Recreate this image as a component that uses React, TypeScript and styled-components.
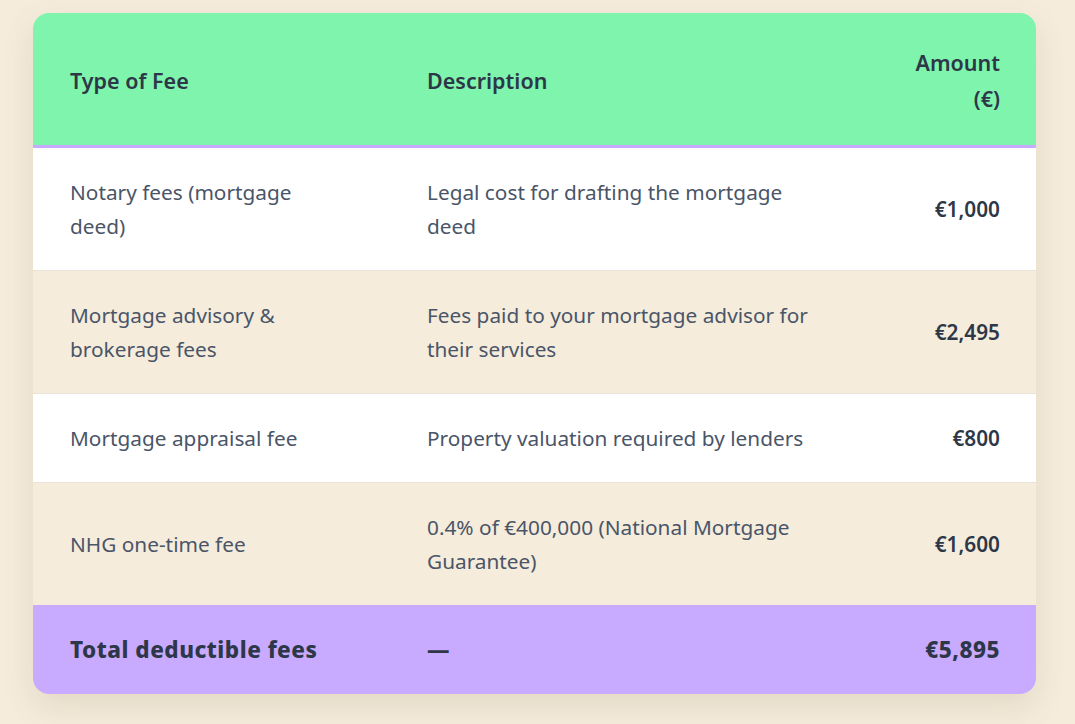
import styled, { createGlobalStyle } from 'styled-components';

const GlobalStyle = createGlobalStyle`
  html, body {
    margin: 0;
    padding: 0;
    background: #f5ecdc;
  }
  body {
    font-family: "Noto Sans", "Open Sans", sans-serif;
  }
`;

const Page = styled.div`
  padding: 13px 39px 30px 33px;
`;

const Card = styled.div`
  width: 1003px;
  border-radius: 16px;
  overflow: hidden;
  box-shadow: 0 12px 32px rgba(120, 100, 60, 0.14);
`;

const Table = styled.table`
  width: 100%;
  border-collapse: collapse;
  table-layout: fixed;
`;

const HeadRow = styled.tr`
  background: #7ef4ad;
  border-bottom: 3px solid #c8aaff;
`;

// padRight keeps the wrap points of each column
const Th = styled.th<{ align?: 'left' | 'right'; padRight?: number }>`
  padding: 32px ${({ padRight }) => padRight ?? 36}px 28px 37px;
  text-align: ${({ align }) => align || 'left'};
  font-size: 21.5px;
  font-weight: 600;
  line-height: 36px;
  color: #2d3748;
  vertical-align: middle;
`;

const Row = styled.tr<{ shade: boolean }>`
  background: ${({ shade }) => (shade ? '#f5ecdc' : '#ffffff')};
  border-bottom: 1px solid #e9e3d7;

  &:nth-last-child(2) {
    border-bottom: none;
  }
`;

const Td = styled.td<{ padRight?: number }>`
  padding: 27px ${({ padRight }) => padRight ?? 36}px 27px 37px;
  font-size: 20.8px;
  line-height: 34px;
  color: #4a5568;
  vertical-align: middle;
`;

const AmountTd = styled(Td)`
  text-align: right;
  font-weight: 600;
  color: #2d3748;
`;

const TotalRow = styled.tr`
  background: #c8aaff;
`;

const TotalTd = styled.td<{ align?: 'left' | 'right' }>`
  padding: 28px 36px 27px 37px;
  font-size: 22.5px;
  line-height: 34px;
  font-weight: 800;
  letter-spacing: 0.5px;
  color: #2d3748;
  text-align: ${({ align }) => align || 'left'};
`;

const fees = [
  { type: 'Notary fees (mortgage deed)', desc: 'Legal cost for drafting the mortgage deed', amount: '€1,000' },
  { type: 'Mortgage advisory & brokerage fees', desc: 'Fees paid to your mortgage advisor for their services', amount: '€2,495' },
  { type: 'Mortgage appraisal fee', desc: 'Property valuation required by lenders', amount: '€800' },
  { type: 'NHG one-time fee', desc: '0.4% of €400,000 (National Mortgage Guarantee)', amount: '€1,600' },
];

export default function App() {
  return (
    <>
      <GlobalStyle />
      <Page>
        <Card>
          <Table>
            <colgroup>
              <col style={{ width: 357 }} />
              <col style={{ width: 484 }} />
              <col style={{ width: 162 }} />
            </colgroup>
            <thead>
              <HeadRow>
                <Th padRight={70}>Type of Fee</Th>
                <Th padRight={52}>Description</Th>
                <Th align="right">Amount (€)</Th>
              </HeadRow>
            </thead>
            <tbody>
              {fees.map((f, i) => (
                <Row key={f.type} shade={i % 2 === 1}>
                  <Td padRight={70}>{f.type}</Td>
                  <Td padRight={52}>{f.desc}</Td>
                  <AmountTd>{f.amount}</AmountTd>
                </Row>
              ))}
              <TotalRow>
                <TotalTd>Total deductible fees</TotalTd>
                <TotalTd>—</TotalTd>
                <TotalTd align="right">€5,895</TotalTd>
              </TotalRow>
            </tbody>
          </Table>
        </Card>
      </Page>
    </>
  );
}
